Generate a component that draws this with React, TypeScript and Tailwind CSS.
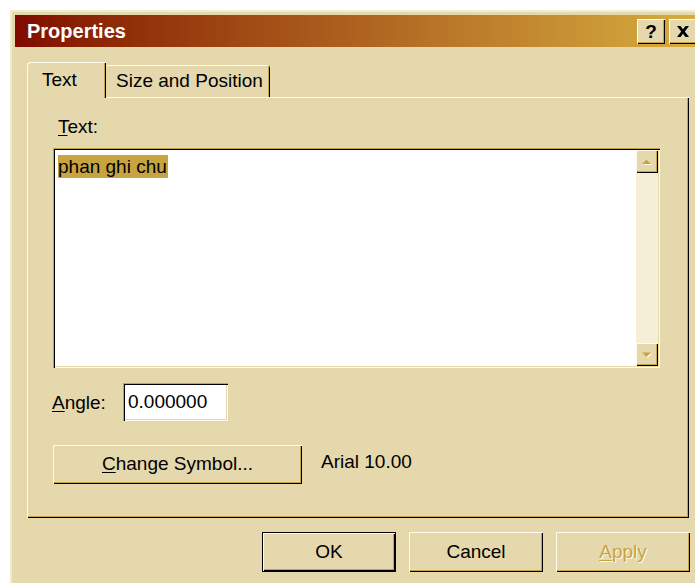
import React from "react";

// Bevels for the classic "wheat" look: light top/left, black + gold bottom/right
const raised =
  "shadow-[inset_1px_1px_0_#fffbea,inset_-1px_-1px_0_#000000,inset_-2px_-2px_0_#c4a444]";
const sunken =
  "shadow-[inset_1px_1px_0_#c4a444,inset_2px_2px_0_#000000,inset_-1px_-1px_0_#fffbea,inset_-2px_-2px_0_#e5d8ac]";

// Scroll arrow button with a disabled-looking gold triangle
const ScrollArrow: React.FC<{ up?: boolean }> = ({ up }) => (
  <div className={`h-[23px] w-full bg-[#e5d8ac] flex items-center justify-center ${raised}`}>
    <svg width="13" height="8" viewBox="0 0 13 8">
      {up ? (
        <>
          <path d="M2 7 L6.5 2.5 L11 7 Z" fill="#fffbea" />
          <path d="M1 6 L5.5 1.5 L10 6 Z" fill="#c4a444" />
        </>
      ) : (
        <>
          <path d="M2 2.5 L6.5 7 L11 2.5 Z" fill="#fffbea" />
          <path d="M1 1.5 L5.5 6 L10 1.5 Z" fill="#c4a444" />
        </>
      )}
    </svg>
  </div>
);

const TitleBar = () => (
  <div className="h-[32px] flex items-center pl-[12px] pr-[4px] bg-linear-to-r from-[#800800] to-[#d6ae40]">
    <span className="text-[20px] font-bold text-white leading-none">Properties</span>
    <div className="ml-auto flex gap-[4px]">
      <div className={`w-[28px] h-[25px] bg-[#e5d8ac] flex items-center justify-center text-[19px] font-bold leading-none ${raised}`}>
        ?
      </div>
      <div className={`w-[28px] h-[25px] bg-[#e5d8ac] flex items-center justify-center ${raised}`}>
        <svg width="14" height="11" viewBox="0 0 14 11">
          <path d="M1 0 H4.5 L7 3.3 L9.5 0 H13 L8.8 5.5 L13 11 H9.5 L7 7.7 L4.5 11 H1 L5.2 5.5 Z" fill="#000" />
        </svg>
      </div>
    </div>
  </div>
);

const Tabs = () => (
  <div className="flex items-end h-[35px]">
    <div className="relative z-10 -mb-px h-[36px] w-[79px] pl-[15px] flex items-center bg-[#e5d8ac] rounded-tl-[3px] shadow-[inset_1px_1px_0_#fffbea,inset_-1px_0_0_#000000,inset_-2px_0_0_#c4a444]">
      Text
    </div>
    <div className="h-[32px] w-[164px] pl-[10px] flex items-center bg-[#e5d8ac] rounded-tr-[2px] shadow-[inset_0_1px_0_#fffbea,inset_-1px_0_0_#000000,inset_-2px_0_0_#c4a444]">
      Size and Position
    </div>
  </div>
);

const Panel = () => (
  <div className={`h-[421px] pl-[26px] pt-[19px] flex flex-col ${raised}`}>
    <div className="pl-[5px] leading-[22px]">
      <span className="underline underline-offset-2">T</span>ext:
    </div>

    {/* multi-line text box with its vertical scrollbar */}
    <div className={`mt-[10px] w-[607px] h-[220px] p-[2px] flex ${sunken}`}>
      <div className="flex-1 bg-white pl-[3px] pt-[3px]">
        <span className="inline-block bg-[#c8a440] leading-[23px] pr-[1px]">phan ghi chu</span>
      </div>
      <div className="w-[22px] flex flex-col bg-[#f6efd7]">
        <ScrollArrow up />
        <div className="flex-1" />
        <ScrollArrow />
      </div>
    </div>

    <div className="mt-[15px] flex items-center -ml-px">
      <div className="w-[71px] pt-[3px]">
        <span className="underline underline-offset-2">A</span>ngle:
      </div>
      <div className={`w-[105px] h-[38px] bg-white flex items-center pl-[5px] ${sunken}`}>
        0.000000
      </div>
    </div>

    <div className="mt-[24px] flex items-center">
      <div className={`w-[249px] h-[39px] bg-[#e5d8ac] flex items-center justify-center ${raised}`}>
        <span>
          <span className="underline underline-offset-2">C</span>hange Symbol...
        </span>
      </div>
      <span className="ml-[19px] -mt-[5px]">Arial 10.00</span>
    </div>
  </div>
);

const Buttons = () => (
  <div className="mt-[14px] -mr-px flex justify-end gap-[13px]">
    <div className="w-[134px] h-[40px] border border-black">
      <div className={`w-full h-full bg-[#e5d8ac] flex items-center justify-center ${raised}`}>OK</div>
    </div>
    <div className={`w-[134px] h-[40px] bg-[#e5d8ac] flex items-center justify-center ${raised}`}>Cancel</div>
    <div
      className={`w-[134px] h-[40px] bg-[#e5d8ac] flex items-center justify-center text-[#c4a444] [text-shadow:1px_1px_0_#fffbea] ${raised}`}
    >
      <span>
        <span className="underline underline-offset-2">A</span>pply
      </span>
    </div>
  </div>
);

export default function App() {
  return (
    <div className="w-[695px] h-[583px] overflow-hidden bg-white pt-[10px] pl-[10px] font-['Liberation_Sans',Arial,sans-serif] text-[19px] text-black">
      <div className="w-[694px] h-[600px] bg-[#e5d8ac] border-t-2 border-l-2 border-[#f3ebcd] p-[3px] flex flex-col">
        <TitleBar />
        <div className="px-[12px] pt-[15px] flex flex-col">
          <Tabs />
          <Panel />
          <Buttons />
        </div>
      </div>
    </div>
  );
}
